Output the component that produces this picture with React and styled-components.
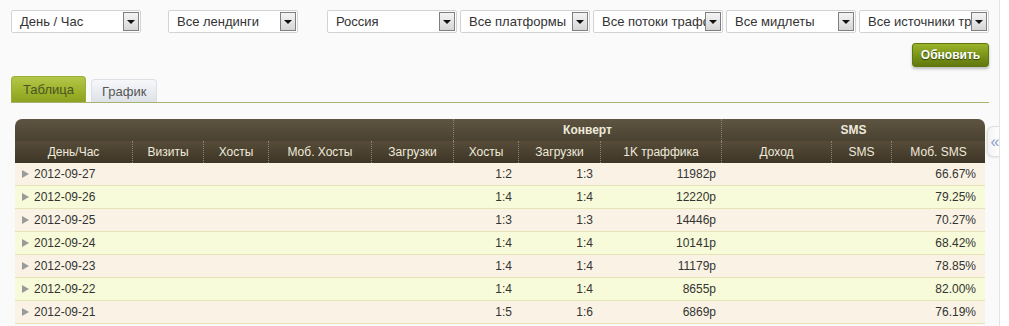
import React from "react";
import styled, { createGlobalStyle } from "styled-components";

const Global = createGlobalStyle`
  html, body { margin: 0; padding: 0; background: #ffffff; }
  body { font-family: "Liberation Sans", Arial, sans-serif; }
  * { box-sizing: border-box; }
`;

const Page = styled.div`
  position: relative;
  width: 1000px;
  height: 326px;
  overflow: hidden;
  background: #fafafa;
  border-right: 1px solid #e4e4e4;
  padding: 10px 10px 0 11px;
`;

const Filters = styled.div`
  display: flex;
  align-items: center;
`;

const Select = styled.div`
  display: flex;
  align-items: center;
  width: 130px;
  height: 23px;
  margin-left: ${(p) => p.$gap || 0}px;
  background: #fff;
  border: 1px solid #d3d3d3;
  border-radius: 2px;
  font-size: 13px;
  color: #333;
  overflow: hidden;
`;

const SelectText = styled.span`
  flex: 1;
  min-width: 0;
  padding-left: 8px;
  white-space: nowrap;
  overflow: hidden;
`;

const SelectArrow = styled.span`
  flex: none;
  display: flex;
  align-items: center;
  justify-content: center;
  width: 16px;
  height: 19px;
  margin-right: 1px;
  border: 1px solid #7f7f7f;
  background: linear-gradient(#f4f4f4, #d6d6d6);
  &::after {
    content: "";
    border-left: 4px solid transparent;
    border-right: 4px solid transparent;
    border-top: 4px solid #111;
  }
`;

const ActionRow = styled.div`
  display: flex;
  justify-content: flex-end;
  margin-top: 10px;
`;

const UpdateButton = styled.button`
  width: 77px;
  height: 24px;
  border: 1px solid #5f7612;
  border-radius: 3px;
  background: linear-gradient(#9bb42a, #758f16 60%, #62790e);
  color: #fff;
  font-family: "Liberation Sans", Arial, sans-serif;
  font-size: 12px;
  font-weight: bold;
  text-shadow: 0 1px 1px #2f3f05;
  box-shadow: 0 2px 3px rgba(0, 0, 0, 0.25);
  padding: 0;
`;

const Tabs = styled.div`
  display: flex;
  align-items: flex-end;
  gap: 5px;
  margin-top: 9px;
  height: 27px;
  border-bottom: 1px solid #a8b170;
`;

const Tab = styled.div`
  display: flex;
  align-items: center;
  justify-content: center;
  height: ${(p) => (p.$active ? 26 : 23)}px;
  padding: 0 ${(p) => (p.$active ? 11 : 10)}px;
  border-radius: 4px 4px 0 0;
  font-size: 13px;
  color: ${(p) => (p.$active ? "#4a5426" : "#555")};
  background: ${(p) =>
    p.$active
      ? "linear-gradient(#b5c74a, #9bb12a 60%, #8ca221)"
      : "linear-gradient(#f7f8fa, #dde2e8)"};
  border: 1px solid ${(p) => (p.$active ? "#9aad34" : "#dcdfe3")};
  border-bottom: none;
`;

const TableWrap = styled.div`
  margin: 16px 4px 0 4px;
`;

const Table = styled.table`
  width: 970px;
  border-collapse: separate;
  border-spacing: 0;
  table-layout: fixed;
  font-size: 12px;
`;

const HeadCell = styled.th`
  height: 22px;
  padding: 0;
  color: #efeadc;
  font-weight: ${(p) => (p.$top ? "bold" : "normal")};
  text-align: center;
  white-space: nowrap;
  background: ${(p) =>
    p.$top
      ? "linear-gradient(#5e5441, #4a4232)"
      : "linear-gradient(#574c39, #3d3526)"};
  border-left: ${(p) => (p.$sep ? "1px dotted #8c8370" : "none")};
  border-top-left-radius: ${(p) => (p.$tl ? "7px" : "0")};
  border-top-right-radius: ${(p) => (p.$tr ? "7px" : "0")};
`;

const Row = styled.tr`
  background: ${(p) => (p.$alt ? "#f8fbd9" : "#faf3e5")};
`;

const Cell = styled.td`
  height: 23px;
  padding: 0 ${(p) => p.$pr ?? 7}px 0 0;
  color: #333;
  white-space: nowrap;
  text-align: ${(p) => (p.$left ? "left" : "right")};
  border-bottom: 1px solid #e6e4b6;
`;

const DateCell = styled(Cell)`
  padding-left: 7px;
  &::before {
    content: "";
    display: inline-block;
    margin-right: 5px;
    vertical-align: 0;
    border-top: 4px solid transparent;
    border-bottom: 4px solid transparent;
    border-left: 7px solid #9a9a9a;
  }
`;

const CollapseTab = styled.div`
  position: absolute;
  left: 987px;
  top: 126px;
  width: 13px;
  height: 31px;
  display: flex;
  align-items: center;
  justify-content: center;
  background: linear-gradient(90deg, #f3f3f3, #ffffff);
  border: 1px solid #dedede;
  border-right: none;
  border-radius: 6px 0 0 6px;
  box-shadow: -1px 1px 2px rgba(0, 0, 0, 0.08);
  color: #8ea2c9;
  font-size: 16px;
  line-height: 1;
  padding-left: 2px;
`;

const selects = [
  { label: "День / Час", gap: 0 },
  { label: "Все лендинги", gap: 27 },
  { label: "Россия", gap: 29 },
  { label: "Все платформы", gap: 3 },
  { label: "Все потоки траффика", gap: 3 },
  { label: "Все мидлеты", gap: 3 },
  { label: "Все источники трафика", gap: 3 },
];

const widths = [117, 71, 65, 103, 82, 65, 82, 121, 110, 60, 94];
const headers = [
  "День/Час",
  "Визиты",
  "Хосты",
  "Моб. Хосты",
  "Загрузки",
  "Хосты",
  "Загрузки",
  "1K траффика",
  "Доход",
  "SMS",
  "Моб. SMS",
];

const rows = [
  ["2012-09-27", "1:2", "1:3", "11982р", "66.67%"],
  ["2012-09-26", "1:4", "1:4", "12220р", "79.25%"],
  ["2012-09-25", "1:3", "1:3", "14446р", "70.27%"],
  ["2012-09-24", "1:4", "1:4", "10141р", "68.42%"],
  ["2012-09-23", "1:4", "1:4", "11179р", "78.85%"],
  ["2012-09-22", "1:4", "1:4", "8655р", "82.00%"],
  ["2012-09-21", "1:5", "1:6", "6869р", "76.19%"],
];

export default function App() {
  return (
    <Page>
      <Global />
      <Filters>
        {selects.map((s) => (
          <Select key={s.label} $gap={s.gap}>
            <SelectText>{s.label}</SelectText>
            <SelectArrow />
          </Select>
        ))}
      </Filters>
      <ActionRow>
        <UpdateButton>Обновить</UpdateButton>
      </ActionRow>
      <Tabs>
        <Tab $active>Таблица</Tab>
        <Tab>График</Tab>
      </Tabs>
      <TableWrap>
        <Table>
          <colgroup>
            {widths.map((w, i) => (
              <col key={i} style={{ width: w }} />
            ))}
          </colgroup>
          <thead>
            <tr>
              <HeadCell $top $tl colSpan={5}></HeadCell>
              <HeadCell $top $sep colSpan={3}>Конверт</HeadCell>
              <HeadCell $top $sep $tr colSpan={3}>SMS</HeadCell>
            </tr>
            <tr>
              {headers.map((h, i) => (
                <HeadCell key={i} $sep={i > 0}>
                  {h}
                </HeadCell>
              ))}
            </tr>
          </thead>
          <tbody>
            {rows.map((r, i) => (
              <Row key={r[0]} $alt={i % 2 === 1}>
                <DateCell $left>{r[0]}</DateCell>
                <Cell />
                <Cell />
                <Cell />
                <Cell />
                <Cell $pr={6}>{r[1]}</Cell>
                <Cell>{r[2]}</Cell>
                <Cell $pr={5}>{r[3]}</Cell>
                <Cell />
                <Cell />
                <Cell $pr={9}>{r[4]}</Cell>
              </Row>
            ))}
          </tbody>
        </Table>
      </TableWrap>
      <CollapseTab>«</CollapseTab>
    </Page>
  );
}
